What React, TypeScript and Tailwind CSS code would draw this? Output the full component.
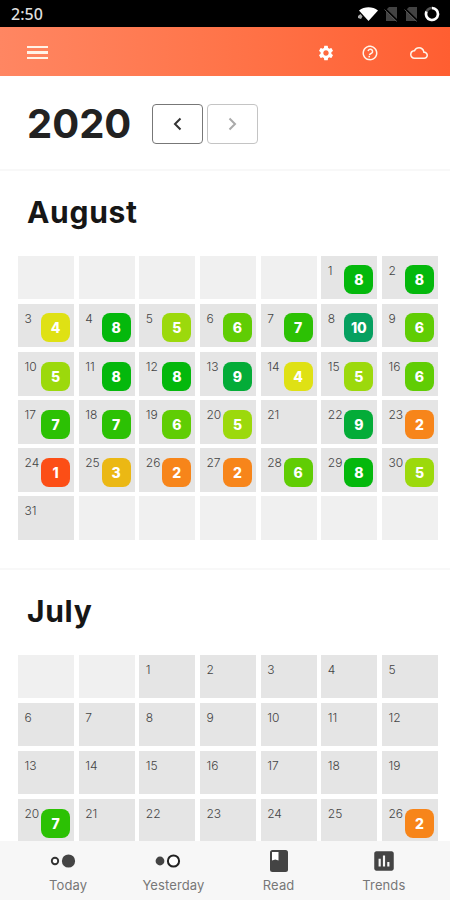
import { useState } from "react";
import { MdOutlineCloud, MdHelpOutline, MdInsertChart, MdSettings } from "react-icons/md";

interface MonthData {
  name: string;
  offset: number;
  lastDay: number;
  scores: Record<number, number>;
}

const scoreColors: Record<number, string> = {
  1: "bg-[#fc4e16]",
  2: "bg-[#f7851a]",
  3: "bg-[#ebb814]",
  4: "bg-[#dfe114]",
  5: "bg-[#9cd90c]",
  6: "bg-[#60cd04]",
  7: "bg-[#2cc104]",
  8: "bg-[#04b80c]",
  9: "bg-[#04ac38]",
  10: "bg-[#06a060]",
};

const months: MonthData[] = [
  {
    name: "August",
    offset: 5,
    lastDay: 31,
    scores: {
      1: 8, 2: 8, 3: 4, 4: 8, 5: 5, 6: 6, 7: 7, 8: 10, 9: 6, 10: 5,
      11: 8, 12: 8, 13: 9, 14: 4, 15: 5, 16: 6, 17: 7, 18: 7, 19: 6, 20: 5,
      22: 9, 23: 2, 24: 1, 25: 3, 26: 2, 27: 2, 28: 6, 29: 8, 30: 5,
    },
  },
  { name: "July", offset: 2, lastDay: 26, scores: { 20: 7, 26: 2 } },
];

function StatusBar() {
  return (
    <div className="flex h-[27px] shrink-0 items-center justify-between bg-black pl-[11px] pr-[10px] text-white">
      <span className="font-['Noto_Sans',sans-serif] text-[16px] font-medium leading-[27px] pt-[2px] text-[#dedede]">2:50</span>
      <div className="flex items-center">
        <svg className="mr-[5px] h-[16px] w-[21px]" viewBox="0 0 21 16">
          <path d="M1 4.500C6.500 0.200 14.500 0.200 20 4.500L10.500 15Z" fill="white" />
          <path d="M0 10L2.500 8L4.500 10.500L3 13L0 12Z" fill="#aaa" />
        </svg>
        <NoSim />
        <NoSim />
        <svg className="h-[16px] w-[16px]" viewBox="0 0 16 16" fill="none" strokeWidth="2.600">
          <circle cx="8" cy="8" r="6" stroke="#555" />
          <path d="M8 2A6 6 0 1 1 2.500 5.600" stroke="white" />
        </svg>
      </div>
    </div>
  );
}

function NoSim() {
  return (
    <svg className="mr-[6px] h-[16px] w-[14px]" viewBox="0 0 14 16">
      <path d="M5 1H13V15H2V4Z" fill="#434343" />
      <path d="M1 2.500L14 15" stroke="black" strokeWidth="1.600" />
      <path d="M0.500 3.500L12.500 15.500" stroke="#555" strokeWidth="1" />
    </svg>
  );
}

function Header() {
  return (
    <header className="flex h-[49px] shrink-0 items-center justify-between bg-linear-to-r from-[#ff8662] via-[#ff7449] via-50% to-[#ff5e31] pl-[27px] pr-[22px] text-[#fff3e8]">
      <button aria-label="Menu" className="flex w-[21px] flex-col gap-[3px] pt-[2px]">
        <span className="h-[2.500px] bg-current" />
        <span className="h-[2.500px] bg-current" />
        <span className="h-[2.500px] bg-current" />
      </button>
      <div className="flex items-center pt-[2px]">
        <MdSettings className="mr-[26px] size-[18px] text-white" />
        <MdHelpOutline className="mr-[31px] size-[18px] rotate-12" />
        <MdOutlineCloud className="size-[18px]" />
      </div>
    </header>
  );
}

function DayCell({ day, score }: { day: number; score?: number }) {
  return (
    <div className="flex h-[43.500px] justify-between bg-[#e5e5e5] pl-[6.500px] pr-[4px]">
      <span className="pt-[7px] text-[12px] font-light leading-[16px] text-[#444]">{day}</span>
      {score && (
        <span
          className={`mt-[9.500px] flex size-[29px] shrink-0 items-center justify-center rounded-[8px] text-[14px] font-extrabold text-white ${scoreColors[score]}`}
        >
          {score}
        </span>
      )}
    </div>
  );
}

function Month({ month }: { month: MonthData }) {
  const total = Math.ceil((month.offset + month.lastDay) / 7) * 7;
  const cells = Array.from({ length: total }, (_, i) => i - month.offset + 1);

  return (
    <section className="border-t-2 border-[#f8f8f8] pb-[28px] pl-[18px] pr-[12px]">
      <h2 className="h-[84.700px] pl-[9px] pt-[23px] text-[30px] font-bold leading-[36px] tracking-[0.700px] text-[#161616]">
        {month.name}
      </h2>
      <div className="grid grid-cols-7 gap-x-[4.670px] gap-y-[4.670px]">
        {cells.map((day) =>
          day < 1 || day > month.lastDay ? (
            <div key={day} className="h-[43.500px] bg-[#f0f0f0]" />
          ) : (
            <DayCell key={day} day={day} score={month.scores[day]} />
          )
        )}
      </div>
    </section>
  );
}

function BottomNav() {
  const items = [
    {
      label: "Today",
      icon: (
        <svg className="h-[16px] w-[26px]" viewBox="0 0 26 16">
          <circle cx="5" cy="8" r="3.200" fill="white" stroke="#333" strokeWidth="1.900" />
          <circle cx="18.500" cy="8" r="6.600" fill="#444" />
        </svg>
      ),
      offset: "-ml-[11px]",
    },
    {
      label: "Yesterday",
      icon: (
        <svg className="h-[16px] w-[26px]" viewBox="0 0 26 16">
          <circle cx="5" cy="8" r="4.400" fill="#444" />
          <circle cx="18.500" cy="8" r="5.600" fill="white" stroke="#222" strokeWidth="2" />
        </svg>
      ),
      offset: "-ml-[11px]",
    },
    {
      label: "Read",
      icon: (
        <svg className="h-[22px] w-[18px]" viewBox="0 0 18 22">
          <rect width="18" height="22" rx="2.500" fill="#444" />
          <path d="M2 2H8.500V10.500L5.250 9.500L2 10.500Z" fill="white" />
        </svg>
      ),
      offset: "",
    },
    { label: "Trends", icon: <MdInsertChart className="size-[26px] text-[#444]" />, offset: "" },
  ];

  return (
    <nav className="grid h-[59px] shrink-0 grid-cols-4 bg-[#f7f7f7] pl-[15.500px] pr-[13.500px]">
      {items.map((item) => (
        <button key={item.label} className="flex flex-col items-center">
          <span className={`flex h-[40px] items-center justify-center ${item.offset}`}>{item.icon}</span>
          <span className="-mt-[4px] text-[13px] leading-[16px] tracking-[0.100px] text-[#777]">{item.label}</span>
        </button>
      ))}
    </nav>
  );
}

export default function App() {
  const [year, setYear] = useState(2020);

  return (
    <div className="flex h-[900px] w-[450px] flex-col overflow-hidden bg-white font-[Inter,sans-serif]">
      <StatusBar />
      <Header />
      <main className="min-h-0 flex-1 overflow-hidden">
        <div className="flex h-[93px] items-center pl-[27px] pt-[2px]">
          <h1 className="w-[125px] text-[40px] font-bold leading-none text-[#222]">{year}</h1>
          <button
            aria-label="Previous year"
            onClick={() => setYear(year - 1)}
            className="flex h-[40px] w-[51px] items-center justify-center rounded-[4px] border border-[#777]"
          >
            <svg className="h-[14px] w-[9px]" viewBox="0 0 9 14" fill="none" stroke="#333" strokeWidth="2">
              <path d="M7.500 1.500L2 7L7.500 12.500" />
            </svg>
          </button>
          <button
            aria-label="Next year"
            disabled
            className="ml-[4px] flex h-[40px] w-[51px] items-center justify-center rounded-[4px] border border-[#c4c4c4]"
          >
            <svg className="h-[14px] w-[9px]" viewBox="0 0 9 14" fill="none" stroke="#aaa" strokeWidth="2">
              <path d="M1.500 1.500L7 7L1.500 12.500" />
            </svg>
          </button>
        </div>
        {months.map((month) => (
          <Month key={month.name} month={month} />
        ))}
      </main>
      <BottomNav />
    </div>
  );
}
